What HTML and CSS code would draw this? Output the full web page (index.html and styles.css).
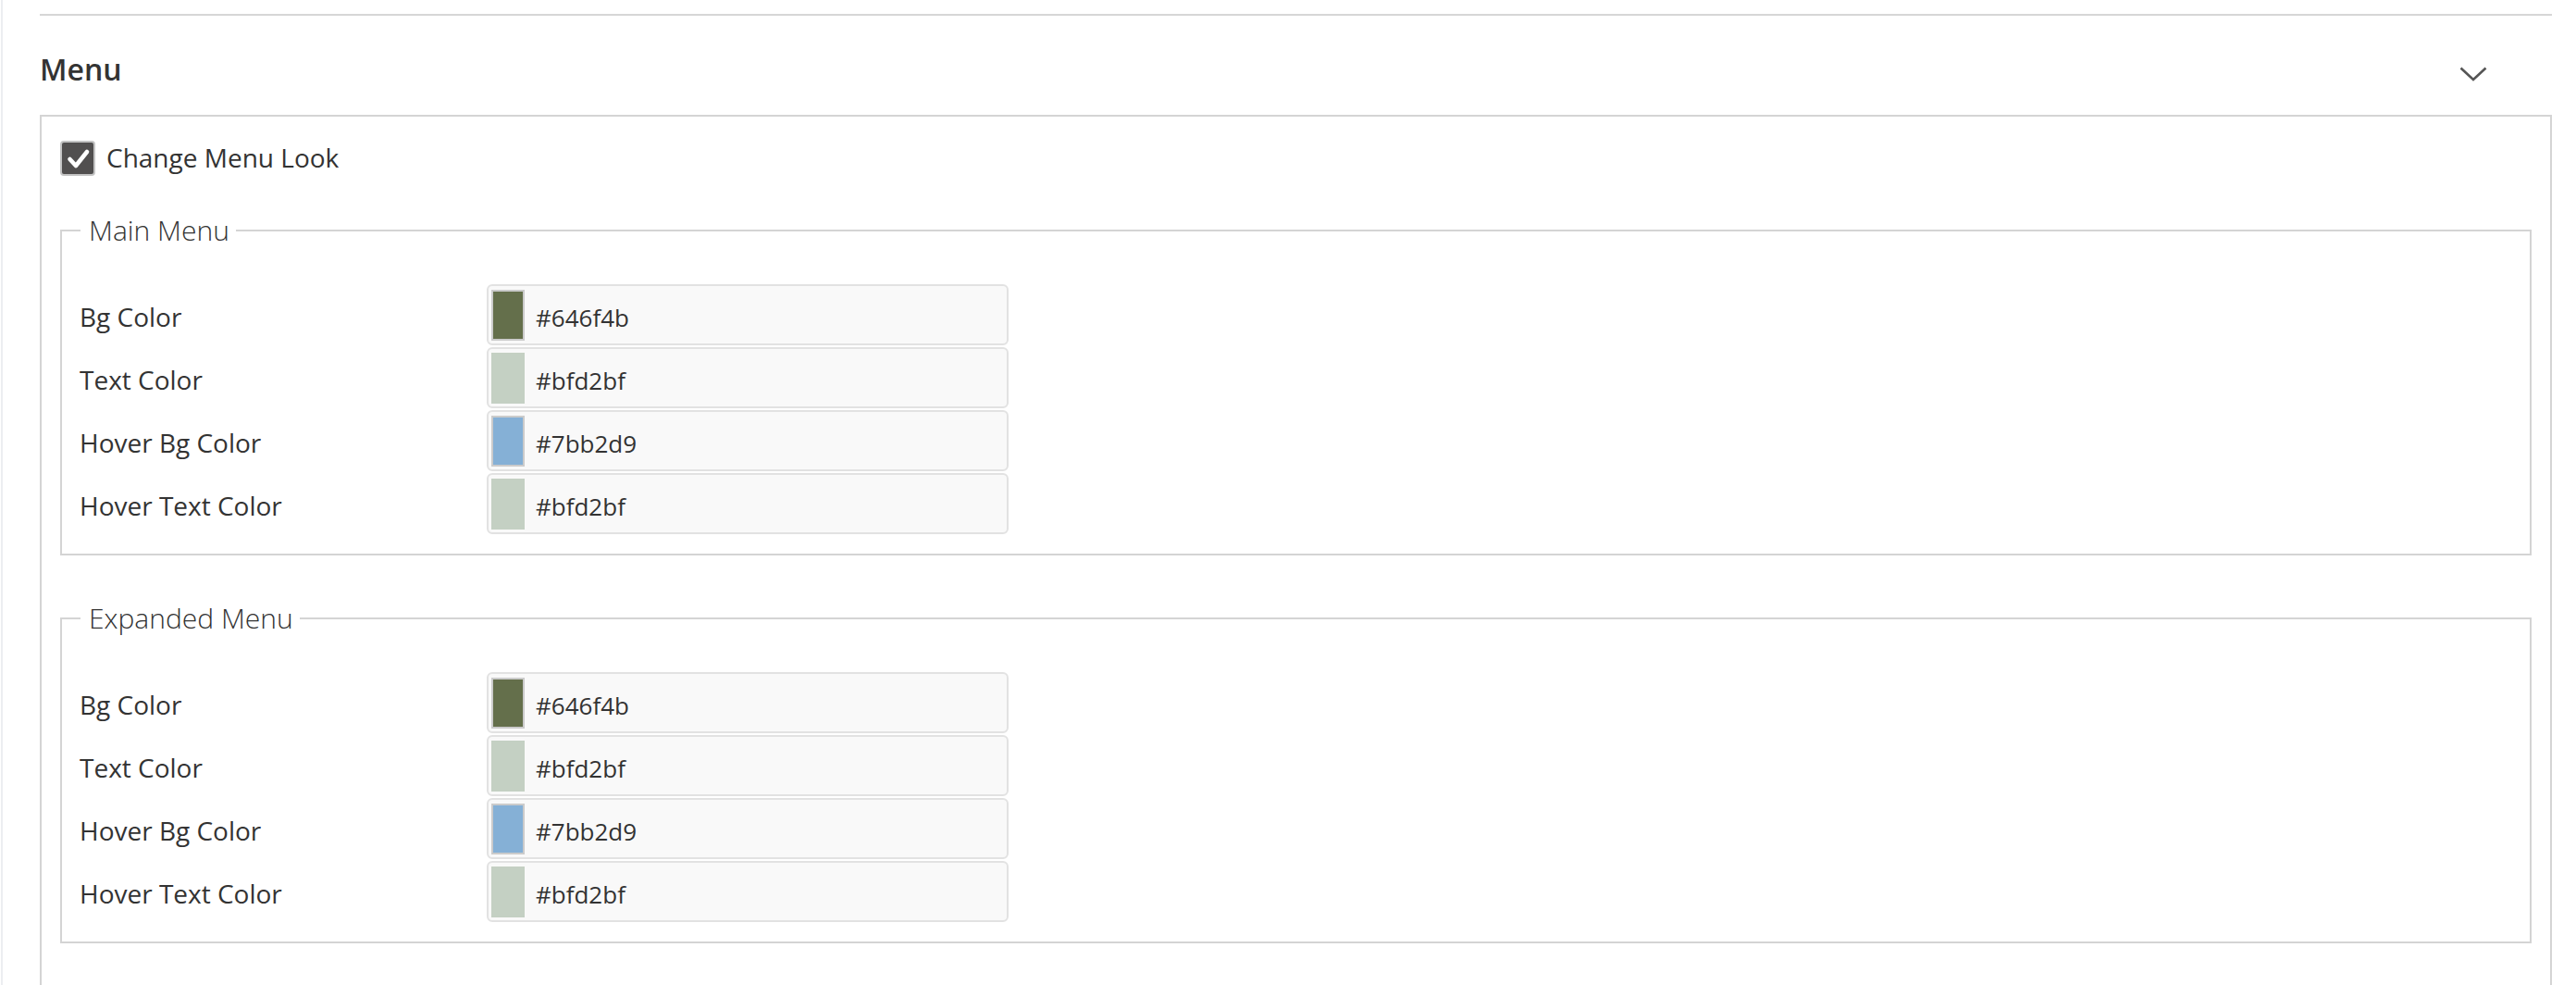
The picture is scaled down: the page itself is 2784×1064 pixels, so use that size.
FILE: index.html
```html
<!DOCTYPE html>
<html lang="en">
<head>
<meta charset="utf-8">
<title>Menu</title>
<link rel="stylesheet" href="styles.css">
</head>
<body>
<div class="page">
  <div class="divider"></div>
  <div class="section-head">
    <h2 class="section-title">Menu</h2>
    <svg class="chevron" width="30" height="16" viewBox="0 0 30 16" aria-hidden="true">
      <polyline points="1.5,1.5 15,14 28.5,1.5" fill="none" stroke="#555" stroke-width="2.6"/>
    </svg>
  </div>
  <div class="section-box">
    <label class="check-row">
      <span class="checkbox">
        <svg width="34" height="34" viewBox="0 0 34 34" aria-hidden="true">
          <polyline points="8.5,18 15,25 27,10" fill="none" stroke="#fff" stroke-width="4.6" stroke-linecap="round" stroke-linejoin="round"/>
        </svg>
      </span>
      <span class="check-label">Change Menu Look</span>
    </label>

    <fieldset class="group">
      <legend class="group-legend">Main Menu</legend>
      <div class="field-row">
        <span class="field-label">Bg Color</span>
        <div class="color-input"><span class="swatch sw-dark"></span><span class="hex">#646f4b</span></div>
      </div>
      <div class="field-row">
        <span class="field-label">Text Color</span>
        <div class="color-input"><span class="swatch sw-light"></span><span class="hex">#bfd2bf</span></div>
      </div>
      <div class="field-row">
        <span class="field-label">Hover Bg Color</span>
        <div class="color-input"><span class="swatch sw-blue"></span><span class="hex">#7bb2d9</span></div>
      </div>
      <div class="field-row">
        <span class="field-label">Hover Text Color</span>
        <div class="color-input"><span class="swatch sw-light"></span><span class="hex">#bfd2bf</span></div>
      </div>
    </fieldset>

    <fieldset class="group group-second">
      <legend class="group-legend">Expanded Menu</legend>
      <div class="field-row">
        <span class="field-label">Bg Color</span>
        <div class="color-input"><span class="swatch sw-dark"></span><span class="hex">#646f4b</span></div>
      </div>
      <div class="field-row">
        <span class="field-label">Text Color</span>
        <div class="color-input"><span class="swatch sw-light"></span><span class="hex">#bfd2bf</span></div>
      </div>
      <div class="field-row">
        <span class="field-label">Hover Bg Color</span>
        <div class="color-input"><span class="swatch sw-blue"></span><span class="hex">#7bb2d9</span></div>
      </div>
      <div class="field-row">
        <span class="field-label">Hover Text Color</span>
        <div class="color-input"><span class="swatch sw-light"></span><span class="hex">#bfd2bf</span></div>
      </div>
    </fieldset>
  </div>
</div>
</body>
</html>
```

FILE: styles.css
```css
html, body {
  margin: 0;
  padding: 0;
  background: #fff;
}

body {
  font-family: "Open Sans", "Liberation Sans", sans-serif;
  color: #333;
  overflow: hidden;
}

.page {
  margin-left: 1px;
  border-left: 2px solid #eceef1;
  padding: 15px 26px 0 40px;
  min-height: 1064px;
  box-sizing: border-box;
}

.divider {
  border-top: 2px solid #d6d6d6;
}

.section-head {
  display: flex;
  align-items: center;
  justify-content: space-between;
  padding: 36px 0 27px;
}

.section-title {
  margin: 0;
  font-size: 32px;
  line-height: 44px;
  font-weight: 600;
  color: #333;
}

.chevron {
  margin-top: 10px;
  margin-right: 70px;
}

.section-box {
  border: 2px solid #d4d4d4;
  padding: 26px 20px 80px;
}

.check-row {
  display: flex;
  align-items: center;
  gap: 12px;
  height: 38px;
}

.checkbox {
  width: 38px;
  height: 38px;
  box-sizing: border-box;
  border: 2px solid #c4c4c4;
  border-radius: 4px;
  background: #514f4f;
  display: flex;
  align-items: center;
  justify-content: center;
}

.check-label {
  font-size: 28px;
  line-height: 38px;
  color: #333;
  padding-bottom: 2px;
}

.group {
  margin: 40px 0 0;
  padding: 39px 20px 21px 19px;
  border: 2px solid #d4d4d4;
  display: flex;
  flex-direction: column;
  gap: 2px;
}

.group-second {
  margin-top: 49px;
}

.group-legend {
  font-size: 30px;
  line-height: 38px;
  font-weight: 300;
  color: #333;
  padding: 0 7px 0 9px;
  margin-left: 1px;
}

.field-row {
  display: grid;
  grid-template-columns: 440px 564px;
  align-items: center;
  height: 66px;
}

.field-label {
  font-size: 28px;
  color: #333;
  padding-top: 4px;
}

.color-input {
  display: flex;
  align-items: center;
  height: 66px;
  box-sizing: border-box;
  border: 2px solid #e2e2e2;
  border-radius: 6px;
  background: #f9f9f9;
  padding-left: 3px;
}

.swatch {
  width: 36px;
  height: 55px;
  box-sizing: border-box;
  border: 2px solid #cbcbcb;
}

.sw-dark { background: #646f4b; }
.sw-light { background: #c4d0c3; border-color: #c4d0c3; }
.sw-blue { background: #85b0d6; }

.hex {
  margin-left: 12px;
  font-size: 26px;
  font-weight: 400;
  color: #333;
  padding-top: 6px;
}
```
